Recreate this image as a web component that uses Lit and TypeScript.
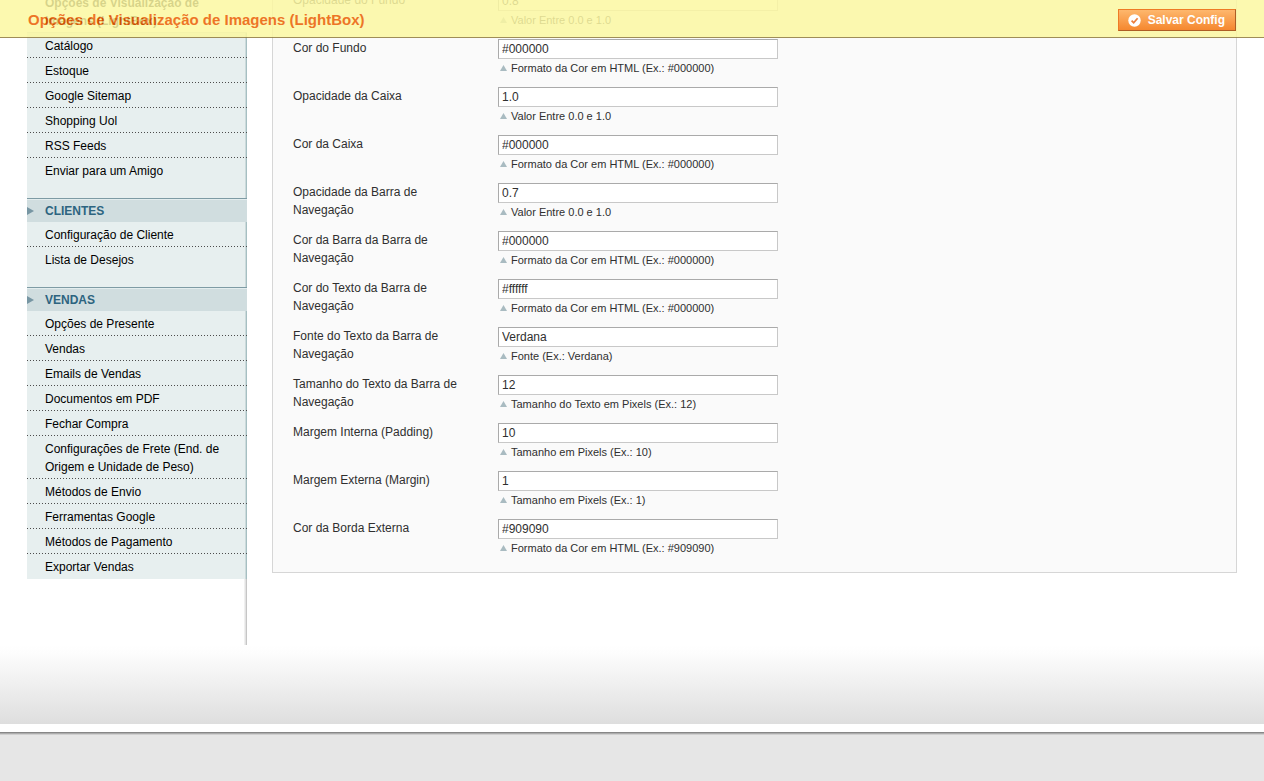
import { LitElement, html, css } from "lit";
import { customElement, property } from "lit/decorators.js";
import { classMap } from "lit/directives/class-map.js";

interface NavGroup {
  title?: string;
  items: string[];
}

interface Field {
  label: string;
  value: string;
  note: string;
}

const ACTIVE = "Opções de Visualização de Imagens (LightBox)";

const GROUPS: NavGroup[] = [
  {
    items: [ACTIVE, "Catálogo", "Estoque", "Google Sitemap", "Shopping Uol", "RSS Feeds", "Enviar para um Amigo"],
  },
  { title: "Clientes", items: ["Configuração de Cliente", "Lista de Desejos"] },
  {
    title: "Vendas",
    items: [
      "Opções de Presente",
      "Vendas",
      "Emails de Vendas",
      "Documentos em PDF",
      "Fechar Compra",
      "Configurações de Frete (End. de Origem e Unidade de Peso)",
      "Métodos de Envio",
      "Ferramentas Google",
      "Métodos de Pagamento",
      "Exportar Vendas",
    ],
  },
];

const COLOR_NOTE = "Formato da Cor em HTML (Ex.: #000000)";
const OPACITY_NOTE = "Valor Entre 0.0 e 1.0";

const FIELDS: Field[] = [
  { label: "Opacidade do Fundo", value: "0.8", note: OPACITY_NOTE },
  { label: "Cor do Fundo", value: "#000000", note: COLOR_NOTE },
  { label: "Opacidade da Caixa", value: "1.0", note: OPACITY_NOTE },
  { label: "Cor da Caixa", value: "#000000", note: COLOR_NOTE },
  { label: "Opacidade da Barra de Navegação", value: "0.7", note: OPACITY_NOTE },
  { label: "Cor da Barra da Barra de Navegação", value: "#000000", note: COLOR_NOTE },
  { label: "Cor do Texto da Barra de Navegação", value: "#ffffff", note: COLOR_NOTE },
  { label: "Fonte do Texto da Barra de Navegação", value: "Verdana", note: "Fonte (Ex.: Verdana)" },
  { label: "Tamanho do Texto da Barra de Navegação", value: "12", note: "Tamanho do Texto em Pixels (Ex.: 12)" },
  { label: "Margem Interna (Padding)", value: "10", note: "Tamanho em Pixels (Ex.: 10)" },
  { label: "Margem Externa (Margin)", value: "1", note: "Tamanho em Pixels (Ex.: 1)" },
  { label: "Cor da Borda Externa", value: "#909090", note: "Formato da Cor em HTML (Ex.: #909090)" },
];

@customElement("config-nav")
class ConfigNav extends LitElement {
  @property({ attribute: false }) groups: NavGroup[] = [];
  @property() active = "";

  static styles = css`
    :host {
      display: block;
      box-sizing: border-box;
      padding-bottom: 66px;
      background: linear-gradient(to right, #f0f0f0 1px, #e2e2e2 1px 2px, #c6c6c6 2px) right / 3px 100% no-repeat;
    }
    .group {
      margin: 0;
      padding: 0 0 15px;
      list-style: none;
      background:
        linear-gradient(to right, #ccdadb 1px, #a6bfc2 1px) right / 2px 100% no-repeat,
        #e7efef;
    }
    .group.last {
      padding-bottom: 0;
    }
    .title {
      display: flex;
      align-items: center;
      gap: 11px;
      margin: 0;
      border-top: 1px solid #7e9ba4;
      padding-top: 1px;
      background: #d0dddf;
      box-shadow: inset 0 1px #e3edee;
      color: #2d6480;
      font-size: 12px;
      line-height: 22px;
      text-transform: uppercase;
    }
    .arrow {
      width: 7px;
      height: 8px;
      fill: #7796a3;
    }
    .link {
      display: block;
      padding: 4px 18px 3px;
      background: linear-gradient(to right, #4c4c4c 1px, transparent 1px) left bottom / 3px 1px repeat-x;
      color: #000;
      text-decoration: none;
    }
    .link.end {
      background: none;
    }
    .link.active {
      background: linear-gradient(#d0dddf, #d0dddf) left bottom / 100% 1px no-repeat #fff;
      font-weight: bold;
    }
  `;

  render() {
    return html`<nav aria-label="Configuração">
      ${this.groups.map(
        (group, g) => html`
          ${group.title
            ? html`<h3 class="title">
                <svg class="arrow" viewBox="0 0 7 8" aria-hidden="true"><path d="M0 0L7 4L0 8Z" /></svg>${group.title}
              </h3>`
            : null}
          <ul class=${classMap({ group: true, last: g === this.groups.length - 1 })}>
            ${group.items.map(
              (item, i) => html`<li>
                <a
                  href="#"
                  class=${classMap({
                    link: true,
                    active: item === this.active,
                    end: i === group.items.length - 1,
                  })}
                  >${item}</a
                >
              </li>`
            )}
          </ul>
        `
      )}
    </nav>`;
  }
}

@customElement("config-form")
class ConfigForm extends LitElement {
  @property({ attribute: false }) fields: Field[] = [];

  static styles = css`
    .box {
      display: grid;
      gap: 10px;
      border: 1px solid #d6d6d6;
      padding: 0 20px 15px;
      background: #fafafa;
      color: #2f2f2f;
    }
    .row {
      display: grid;
      grid-template-columns: 185px 280px;
      column-gap: 20px;
    }
    .input {
      display: block;
      box-sizing: border-box;
      width: 100%;
      height: 20px;
      margin: 0;
      padding: 0 3px;
      border: 1px solid;
      border-color: #aaa #c8c8c8 #c8c8c8 #aaa;
      background: #fff;
      color: #2f2f2f;
      font: inherit;
    }
    .note {
      display: flex;
      align-items: center;
      gap: 4px;
      margin: 0;
      padding-left: 2px;
      font-size: 11px;
    }
    .mark {
      width: 7px;
      height: 6px;
      fill: #a9bbc1;
    }
  `;

  render() {
    return html`<form class="box">
      ${this.fields.map(
        (field, i) => html`<div class="row">
          <label for="field-${i}">${field.label}</label>
          <div>
            <input class="input" type="text" id="field-${i}" aria-describedby="note-${i}" .value=${field.value} />
            <p class="note" id="note-${i}">
              <svg class="mark" viewBox="0 0 7 6" aria-hidden="true"><path d="M3.5 0L7 6H0Z" /></svg>${field.note}
            </p>
          </div>
        </div>`
      )}
    </form>`;
  }
}

@customElement("app-root")
class AppRoot extends LitElement {
  static styles = css`
    :host {
      display: flex;
      flex-direction: column;
      position: relative;
      height: 100vh;
      overflow: hidden;
      background: #fff;
      color: #2f2f2f;
      font: 12px/18px "Liberation Sans", Arial, Helvetica, sans-serif;
    }
    .bar {
      position: absolute;
      inset: 0 0 auto;
      display: flex;
      align-items: center;
      justify-content: space-between;
      padding: 9px 28px 6px;
      border-bottom: 1px solid #8f7a3c;
      background: #fcf8a2;
      opacity: 0.85;
    }
    .heading {
      margin: 0;
      color: #eb5e00;
      font-size: 15px;
      line-height: 22px;
    }
    .save {
      display: flex;
      align-items: center;
      gap: 7px;
      height: 22px;
      padding: 0 10px 0 9px;
      border: 1px solid;
      border-color: #ed6502 #a04300 #a04300 #ed6502;
      background: linear-gradient(#ffac55, #f5740c);
      color: #fff;
      font: bold 12px "Liberation Sans", Arial, Helvetica, sans-serif;
      cursor: pointer;
    }
    .check {
      width: 13px;
      height: 13px;
    }
    /* The page is scrolled, so the first rows run up beneath the bar. */
    .columns {
      display: grid;
      grid-template-columns: 220px 1fr;
      column-gap: 25px;
      margin-top: -10px;
      padding: 0 27px;
    }
    .fade {
      height: 79px;
      flex: none;
      background: linear-gradient(#fff, #fdfdfd 10%, #dedede);
    }
    .footer {
      flex: 1;
      margin-top: 8px;
      border-top: 1px solid #878787;
      background: linear-gradient(#acacac 1px, #cfcfcf 1px 2px, #e6e6e6 2px);
    }
  `;

  render() {
    return html`
      <main class="columns">
        <config-nav .groups=${GROUPS} active=${ACTIVE}></config-nav>
        <config-form .fields=${FIELDS}></config-form>
      </main>
      <div class="fade"></div>
      <footer class="footer"></footer>
      <header class="bar">
        <h1 class="heading">${ACTIVE}</h1>
        <button class="save" type="button">
          <svg class="check" viewBox="0 0 13 13" aria-hidden="true">
            <circle cx="6.5" cy="6.5" r="6.2" fill="#fff" />
            <path d="M3.6 6.6L5.7 8.8L9.6 4.2" fill="none" stroke="#e8681a" stroke-width="1.7" />
          </svg>
          Salvar Config
        </button>
      </header>
    `;
  }
}
